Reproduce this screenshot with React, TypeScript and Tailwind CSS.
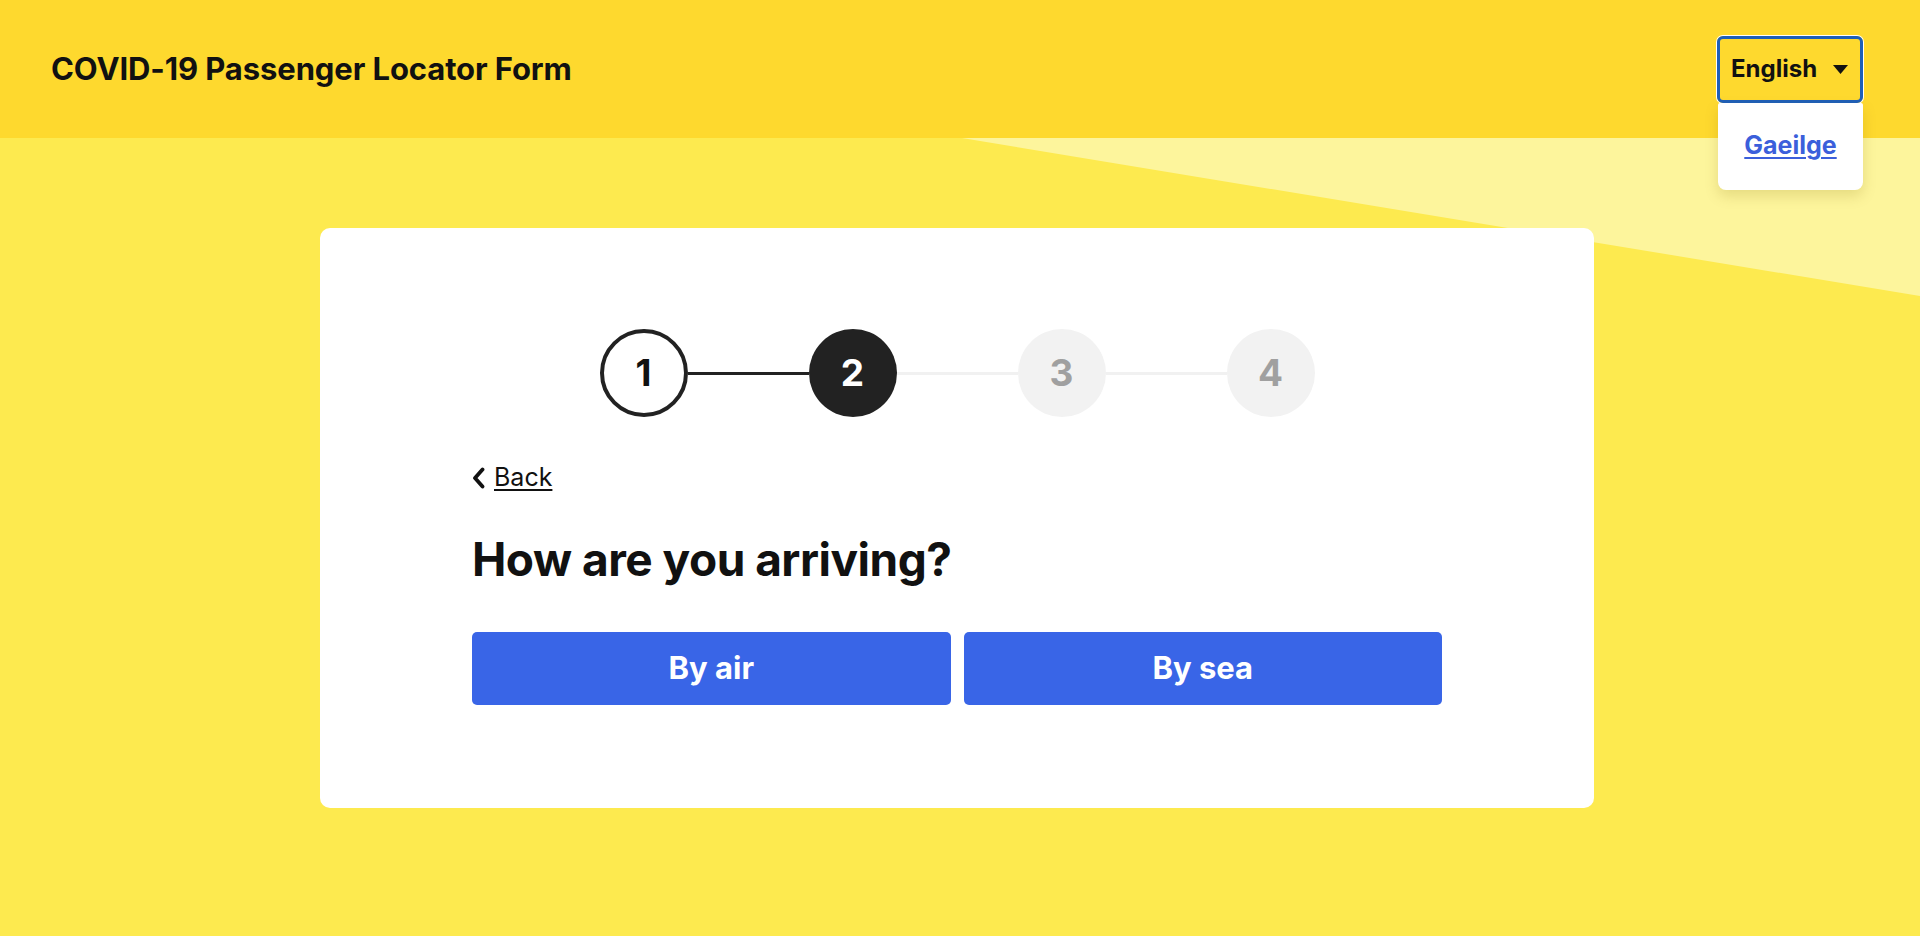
import React from "react";

export default function App() {
  const font = { fontFamily: "Inter, 'Noto Sans', sans-serif" };
  return (
    <div className="relative min-h-[936px] w-full overflow-hidden bg-[#FDEA4F]" style={font}>
      {/* decorative light band */}
      <svg className="pointer-events-none absolute left-0 top-[138px]" width="1920" height="200" viewBox="0 0 1920 200">
        <polygon points="962,0 1920,0 1920,158" fill="#FDF59C" />
      </svg>

      <header className="relative z-10 flex h-[138px] items-center justify-between bg-[#FED92E] pl-[51px] pr-[57px]">
        <h1 className="text-[31px] font-bold tracking-[-0.1px] text-[#111]">COVID-19 Passenger Locator Form</h1>
        <div className="relative">
          <button className="flex h-[67px] w-[146px] items-center justify-between rounded-[6px] border-[3px] border-[#1E5FB8] pl-[11px] pr-[12px] text-[24px] font-bold text-[#111] shadow-[0_0_0_1px_#ffffff]">
            <span>English</span>
            <svg width="15" height="9" viewBox="0 0 15 9">
              <polygon points="0,0 15,0 7.5,9" fill="#111" />
            </svg>
          </button>
          <div className="absolute left-[1px] top-[67px] flex h-[87px] w-[145px] items-center justify-center rounded-b-[8px] rounded-t-[2px] bg-white shadow-[0_6px_14px_rgba(120,100,0,0.18)]">
            <a href="#" className="text-[25px] font-bold text-[#3B5FDB] underline underline-offset-[3px]">Gaeilge</a>
          </div>
        </div>
      </header>

      <main className="relative flex justify-center pr-[6px] pt-[90px]">
        <div className="w-[1274px] rounded-[10px] bg-white px-[152px] pb-[103px] pt-[101px]">
          <div className="flex items-center justify-center">
            <div className="flex h-[88px] w-[88px] items-center justify-center rounded-full border-[4px] border-[#222] bg-white text-[37px] font-bold text-[#111]">1</div>
            <div className="h-[3px] w-[121px] bg-[#222]" />
            <div className="flex h-[88px] w-[88px] items-center justify-center rounded-full bg-[#222] text-[37px] font-bold text-white">2</div>
            <div className="h-[3px] w-[121px] bg-[#F1F1F1]" />
            <div className="flex h-[88px] w-[88px] items-center justify-center rounded-full bg-[#F2F2F2] text-[37px] font-bold text-[#A0A0A0]">3</div>
            <div className="h-[3px] w-[121px] bg-[#F1F1F1]" />
            <div className="flex h-[88px] w-[88px] items-center justify-center rounded-full bg-[#F2F2F2] text-[37px] font-bold text-[#A0A0A0]">4</div>
          </div>

          <a href="#" className="mt-[42px] flex items-center gap-[9px] text-[25px] text-[#111]">
            <svg width="13" height="22" viewBox="0 0 13 22">
              <polyline points="10.5,2.5 3,11 10.5,19.5" fill="none" stroke="#111" strokeWidth="3.8" strokeLinecap="round" strokeLinejoin="round" />
            </svg>
            <span className="underline underline-offset-[3px]">Back</span>
          </a>

          <h2 className="mt-[35px] text-[46px] font-bold leading-[54px] tracking-[-0.5px] text-[#111]">How are you arriving?</h2>

          <div className="mt-[46px] grid grid-cols-2 gap-[13px]">
            <button className="h-[73px] rounded-[5px] bg-[#3965E7] text-[31px] font-bold text-white">By air</button>
            <button className="h-[73px] rounded-[5px] bg-[#3965E7] text-[31px] font-bold text-white">By sea</button>
          </div>
        </div>
      </main>
    </div>
  );
}
